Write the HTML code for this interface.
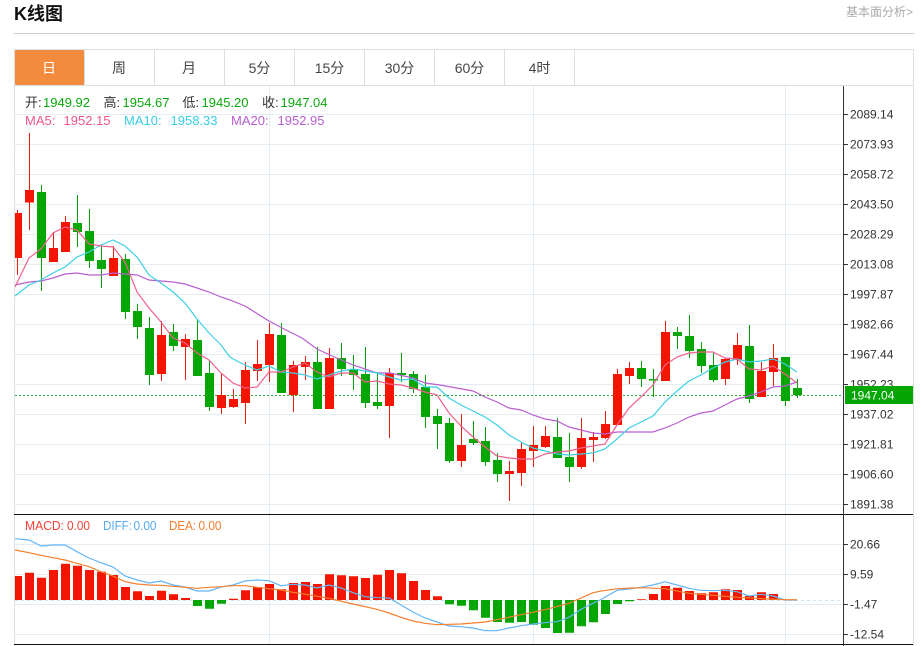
<!DOCTYPE html>
<html><head><meta charset="utf-8"><style>
html,body{margin:0;padding:0;background:#fff;width:921px;height:646px;overflow:hidden}
svg{display:block;font-family:"Liberation Sans","Noto Sans CJK SC",sans-serif}
</style></head><body>
<svg width="921" height="646" viewBox="0 0 921 646" xmlns="http://www.w3.org/2000/svg">
<defs><clipPath id="c"><rect x="15" y="86" width="828" height="558"/></clipPath></defs>
<text x="14" y="20" font-size="18" font-weight="700" fill="#111">K线图</text>
<text x="846" y="16" font-size="12" fill="#aaa">基本面分析&gt;</text>
<path d="M14 33.5H914" stroke="#ccc" fill="none"/>
<!-- frame -->
<path d="M14.5 646V49.5H913.5V646M14.5 85.5H913.5M84.5 50V85M154.5 50V85M224.5 50V85M294.5 50V85M364.5 50V85M434.5 50V85M504.5 50V85M574.5 50V85" stroke="#dcdfe2" fill="none"/>
<rect x="15" y="50" width="69" height="35" rx="1" fill="#f38b3f"/>
<g font-size="14" fill="#444" text-anchor="middle">
<text x="49" y="73" fill="#fff">日</text><text x="119" y="73">周</text><text x="189" y="73">月</text><text x="259.500" y="73">5分</text><text x="329.500" y="73">15分</text><text x="399.500" y="73">30分</text><text x="469.500" y="73">60分</text><text x="539.500" y="73">4时</text>
</g>
<!-- grid -->
<path d="M15 114.500H843M15 144.500H843M15 174.500H843M15 204.500H843M15 234.500H843M15 264.500H843M15 294.500H843M15 324.500H843M15 354.500H843M15 384.500H843M15 414.500H843M15 444.500H843M15 474.500H843M15 504.500H843M15 544.500H843M15 574.500H843M15 604.500H843M15 634.500H843M269.500 86V644M533.500 86V644M785.500 86V644" stroke="#e3edf3" fill="none"/>
<path d="M15 395.500H843" stroke="#2aae2a" stroke-dasharray="2 2" fill="none"/>
<path d="M15 600.500H843" stroke="#c4e6f2" stroke-dasharray="3 3" fill="none"/>
<g clip-path="url(#c)">
<!-- red candles -->
<path stroke="#ee1c0c" fill="none" d="M17.500 210V275M29.500 133V230M53.500 233V262M65.500 216V252M113.500 246V276M161.500 321V381M185.500 334V380M221.500 374V414M233.500 389V408M245.500 362V424M257.500 340V381M269.500 323V382M293.500 361V412M305.500 356V380M329.500 348V409M389.500 368V438M461.500 414V467M509.500 461V501M521.500 443V486M533.500 426V467M545.500 426V448M581.500 418V469M593.500 432V462M605.500 411V439M617.500 369V425M629.500 362V384M665.500 321V381M725.500 358V385M737.500 333V365M761.500 362V397M773.500 344V386"/>
<path fill="#f31500" d="M13 213h9v45h-9zM25 190h9v12.500h-9zM49 248h9v14h-9zM61 222h9v30h-9zM109 258h9v18h-9zM157 335h9v39h-9zM181 339h9v8h-9zM217 395h9v13h-9zM229 399h9v8h-9zM241 370h9v33h-9zM253 364h9v7h-9zM265 334h9v31h-9zM289 365h9v30h-9zM301 362h9v5h-9zM325 358h9v51h-9zM385 373h9v33h-9zM457 445h9v16h-9zM505 471h9v3h-9zM517 449h9v24h-9zM529 445h9v6h-9zM541 436h9v11h-9zM577 438h9v29h-9zM589 437h9v3h-9zM601 424h9v14h-9zM613 374h9v51h-9zM625 368h9v8h-9zM661 332h9v49h-9zM721 359h9v20h-9zM733 345h9v15h-9zM757 371h9v26h-9zM769 358h9v14h-9z"/>
<!-- green candles -->
<path stroke="#05a005" fill="none" d="M41.500 185V291M77.500 195V247M89.500 209V268M101.500 245V288M125.500 254V319M137.500 304V339M149.500 317V385M173.500 324V351M197.500 320V376M209.500 361V411M281.500 323V393M317.500 347V409M341.500 343V376M353.500 355V390M365.500 347V408M377.500 372V409M401.500 353V382M413.500 371V393M425.500 375V428M437.500 409V449M449.500 418V463M473.500 421V445M485.500 427V466M497.500 453V482M557.500 418V458M569.500 433V482M641.500 361V387M653.500 369V397M677.500 327V349M689.500 315V358M701.500 342V373M713.500 353V382M749.500 325V403M785.500 357V406M797.500 379V398"/>
<path fill="#03a603" d="M37 192h9v66h-9zM73 223h9v9h-9zM85 231h9v30h-9zM97 260h9v9h-9zM121 259h9v53h-9zM133 311h9v16h-9zM145 328h9v47h-9zM169 332h9v14h-9zM193 340h9v36h-9zM205 373h9v34h-9zM277 335h9v58h-9zM313 362h9v47h-9zM337 358h9v11h-9zM349 369h9v6h-9zM361 374h9v29h-9zM373 402h9v4h-9zM397 373h9v2h-9zM409 374h9v15h-9zM421 387h9v30h-9zM433 416h9v8h-9zM445 423h9v38h-9zM469 439h9v4h-9zM481 441h9v21h-9zM493 460h9v14h-9zM553 437h9v21h-9zM565 457h9v10h-9zM637 368h9v11h-9zM649 379h9v1.500h-9zM673 332h9v4h-9zM685 336h9v15h-9zM697 349h9v17h-9zM709 365h9v15h-9zM745 346h9v53h-9zM781 357h9v44h-9zM793 388h9v7h-9z"/>
<!-- MA lines -->
<polyline fill="none" stroke="#b95fd0" stroke-width="1.200" points="15,285 29,282 41,281 53,278 65,274 77,273 89,275 101,275 113,273 125,274 137,275 149,280 161,281 173,282 185,284 197,288 209,292 221,297 230,300 245,306 269,321 282,328 302,338 317,349 330,355 353,365 377,373 390,373 413,378 425,383 440,385 473,391 485,397 497,402 509,408 521,410 533,415 545,419 557,421 569,427 581,430 593,433 605,434 617,432 630,432 653,432 665,428 677,423 689,417 701,413 713,411 725,405 737,399 749,396 761,392 773,387 785,386 797,382"/>
<polyline fill="none" stroke="#3fcfe4" stroke-width="1.200" points="15,296 29,285 41,280 53,273 65,267 77,257 89,252 101,245 113,240 125,246 137,257 149,275 161,283 173,292 185,303 197,319 209,333 221,345 230,357 235,360 245,365 257,370 269,366 281,372 293,373 305,375 317,379 329,375 341,371 353,369 365,371 377,373 389,377 401,380 413,379 425,387 437,387 449,398 461,405 473,411 485,417 497,425 509,435 521,442 533,448 545,451 557,454 569,455 581,454 593,453 605,449 617,439 629,428 641,422 653,416 665,402 677,391 689,381 701,375 713,368 725,362 737,359 749,362 761,361 773,359 785,364 797,372"/>
<polyline fill="none" stroke="#f0608e" stroke-width="1.200" points="15,287 29,258 41,249 53,233 65,227 77,230 89,244 101,246 113,247 125,262 137,292 149,308 161,322 173,338 185,343 197,353 209,360 221,373 233,383 245,388 257,387 269,372 281,372 293,367 305,363 317,372 329,377 341,373 353,373 365,382 377,381 389,384 401,385 413,388 425,392 437,395 449,413 461,426 473,437 485,447 497,456 509,458 521,459 533,459 545,454 557,452 569,451 581,448 593,446 605,444 617,425 629,408 641,397 653,385 665,365 677,357 689,353 701,352 713,352 725,358 737,359 749,369 761,370 773,366 785,374 797,383"/>
<!-- MACD bars -->
<path fill="#f31500" d="M13 576h9v24h-9zM25 572.700h9v27.300h-9zM37 577.700h9v22.300h-9zM49 570h9v30h-9zM61 563.700h9v36.300h-9zM73 565.700h9v34.300h-9zM85 570h9v30h-9zM97 571.700h9v28.300h-9zM109 575h9v25h-9zM121 587h9v13h-9zM133 591.300h9v8.700h-9zM145 596h9v4h-9zM157 590.700h9v9.300h-9zM169 594.300h9v5.700h-9zM181 598h9v2h-9zM229 598.700h9v1.300h-9zM241 590.300h9v9.700h-9zM253 587h9v13h-9zM265 584h9v16h-9zM277 589.300h9v10.700h-9zM289 583h9v17h-9zM301 582h9v18h-9zM313 584h9v16h-9zM325 574.300h9v25.700h-9zM337 575.300h9v24.700h-9zM349 576.300h9v23.700h-9zM361 578h9v22h-9zM373 574.700h9v25.300h-9zM385 570h9v30h-9zM397 573.300h9v26.700h-9zM409 581h9v19h-9zM421 590h9v10h-9zM433 596.300h9v3.700h-9zM637 599.300h9v.7h-9zM649 594h9v6h-9zM661 586h9v14h-9zM673 587.700h9v12.300h-9zM685 591h9v9h-9zM697 593.300h9v6.700h-9zM709 592.300h9v7.700h-9zM721 589.300h9v10.700h-9zM733 590h9v10h-9zM745 596h9v4h-9zM757 592.300h9v7.700h-9zM769 594h9v6h-9z"/>
<path fill="#03a603" d="M193 600h9v6h-9zM205 600h9v8.700h-9zM217 600h9v3.700h-9zM445 600h9v4.300h-9zM457 600h9v5.700h-9zM469 600h9v10.300h-9zM481 600h9v17.700h-9zM493 600h9v22h-9zM505 600h9v22.700h-9zM517 600h9v22h-9zM529 600h9v24.700h-9zM541 600h9v28h-9zM553 600h9v33h-9zM565 600h9v32.700h-9zM577 600h9v26.300h-9zM589 600h9v22.300h-9zM601 600h9v14h-9zM613 600h9v4h-9zM625 600h9v1.300h-9z"/>
<polyline fill="none" stroke="#64b5f6" stroke-width="1.200" points="15,538.700 29,540 41,546 53,545 65,545 77,551.700 89,558 101,562.700 113,567 125,576 137,580 149,583 161,581 173,585 185,587 197,591 209,591 221,587 233,585 245,581 257,580 269,580.700 281,585.700 293,584.300 305,585 317,588 329,585 341,588 353,592.700 365,596.700 377,597.700 389,598 401,605 413,612 425,618 437,622 449,626 461,626.700 473,628 485,630.700 497,630.700 509,628 521,625.700 533,624 545,622.700 557,621.700 569,617.300 581,609.300 593,603.300 600,600 617,590.300 629,589 641,587.300 653,585 665,581.700 677,585 689,588.300 701,590.300 713,590.700 725,590.300 737,591.700 749,596 761,594.300 773,596 785,600 797,600"/>
<polyline fill="none" stroke="#f57f2e" stroke-width="1.200" points="15,550 29,552.700 41,555.300 53,557.700 65,560 77,563.300 89,566.700 101,571.700 113,576 125,581.700 137,584 149,585 161,585.300 173,586.300 185,587.300 197,588.300 209,587.300 221,586.700 233,585.700 245,585.700 257,587.300 269,588.700 281,590 293,592.300 300,593.300 329,598.300 353,604 377,609.300 389,613 401,617.300 413,621 425,623.300 437,624.700 461,624 485,622 497,619.700 521,614.700 545,609.700 569,603.300 581,598 593,592.700 600,591.300 617,588.700 641,587.700 665,588.700 689,593.300 713,595.300 737,597.300 761,598.700 785,599.700 797,599.700"/>
</g>
<!-- legend -->
<g font-size="13">
<text x="25" y="107" fill="#333">开:</text><text x="43" y="107" fill="#0aa90c">1949.92</text>
<text x="103.500" y="107" fill="#333">高:</text><text x="122.500" y="107" fill="#0aa90c">1954.67</text>
<text x="182.500" y="107" fill="#333">低:</text><text x="201.500" y="107" fill="#0aa90c">1945.20</text>
<text x="262" y="107" fill="#333">收:</text><text x="280.500" y="107" fill="#0aa90c">1947.04</text>
<g fill="#f0568a"><text x="25" y="125">MA5:</text><text x="63.500" y="125">1952.15</text></g>
<g fill="#38cde6"><text x="124" y="125">MA10:</text><text x="170.500" y="125">1958.33</text></g>
<g fill="#b85dd2"><text x="231" y="125">MA20:</text><text x="277.500" y="125">1952.95</text></g>
<g fill="#f44336"><text x="25" y="530" textLength="39" lengthAdjust="spacingAndGlyphs">MACD:</text><text x="67" y="530" textLength="23" lengthAdjust="spacingAndGlyphs">0.00</text></g>
<g fill="#57aaf0"><text x="103" y="530" textLength="29" lengthAdjust="spacingAndGlyphs">DIFF:</text><text x="133.500" y="530" textLength="23" lengthAdjust="spacingAndGlyphs">0.00</text></g>
<g fill="#f57c2c"><text x="169" y="530" textLength="27" lengthAdjust="spacingAndGlyphs">DEA:</text><text x="198.500" y="530" textLength="23" lengthAdjust="spacingAndGlyphs">0.00</text></g>
</g>
<!-- dividers and axis -->
<path d="M14 514.500H913M14 644.500H913" stroke="#111" fill="none"/>
<path d="M843.500 86V646" stroke="#333" fill="none"/>
<path stroke="#333" fill="none" d="M843 114.500h5M843 144.500h5M843 174.500h5M843 204.500h5M843 234.500h5M843 264.500h5M843 294.500h5M843 324.500h5M843 354.500h5M843 384.500h5M843 414.500h5M843 444.500h5M843 474.500h5M843 504.500h5M843 544.500h5M843 574.500h5M843 604.500h5M843 634.500h5"/>
<g font-size="12" fill="#333">
<text x="850" y="118.500">2089.14</text><text x="850" y="148.500">2073.93</text><text x="850" y="178.500">2058.72</text><text x="850" y="208.500">2043.50</text><text x="850" y="238.500">2028.29</text><text x="850" y="268.500">2013.08</text><text x="850" y="298.500">1997.87</text><text x="850" y="328.500">1982.66</text><text x="850" y="358.500">1967.44</text><text x="850" y="388.500">1952.23</text><text x="850" y="418.500">1937.02</text><text x="850" y="448.500">1921.81</text><text x="850" y="478.500">1906.60</text><text x="850" y="508.500">1891.38</text>
<text x="850" y="548.500">20.66</text><text x="850" y="578.500">9.59</text><text x="850" y="608.500">-1.47</text><text x="850" y="638.500">-12.54</text>
</g>
<rect x="845" y="386" width="68" height="18" fill="#03a603"/>
<text x="851" y="399.500" font-size="12" fill="#fff">1947.04</text>
</svg>
</body></html>
